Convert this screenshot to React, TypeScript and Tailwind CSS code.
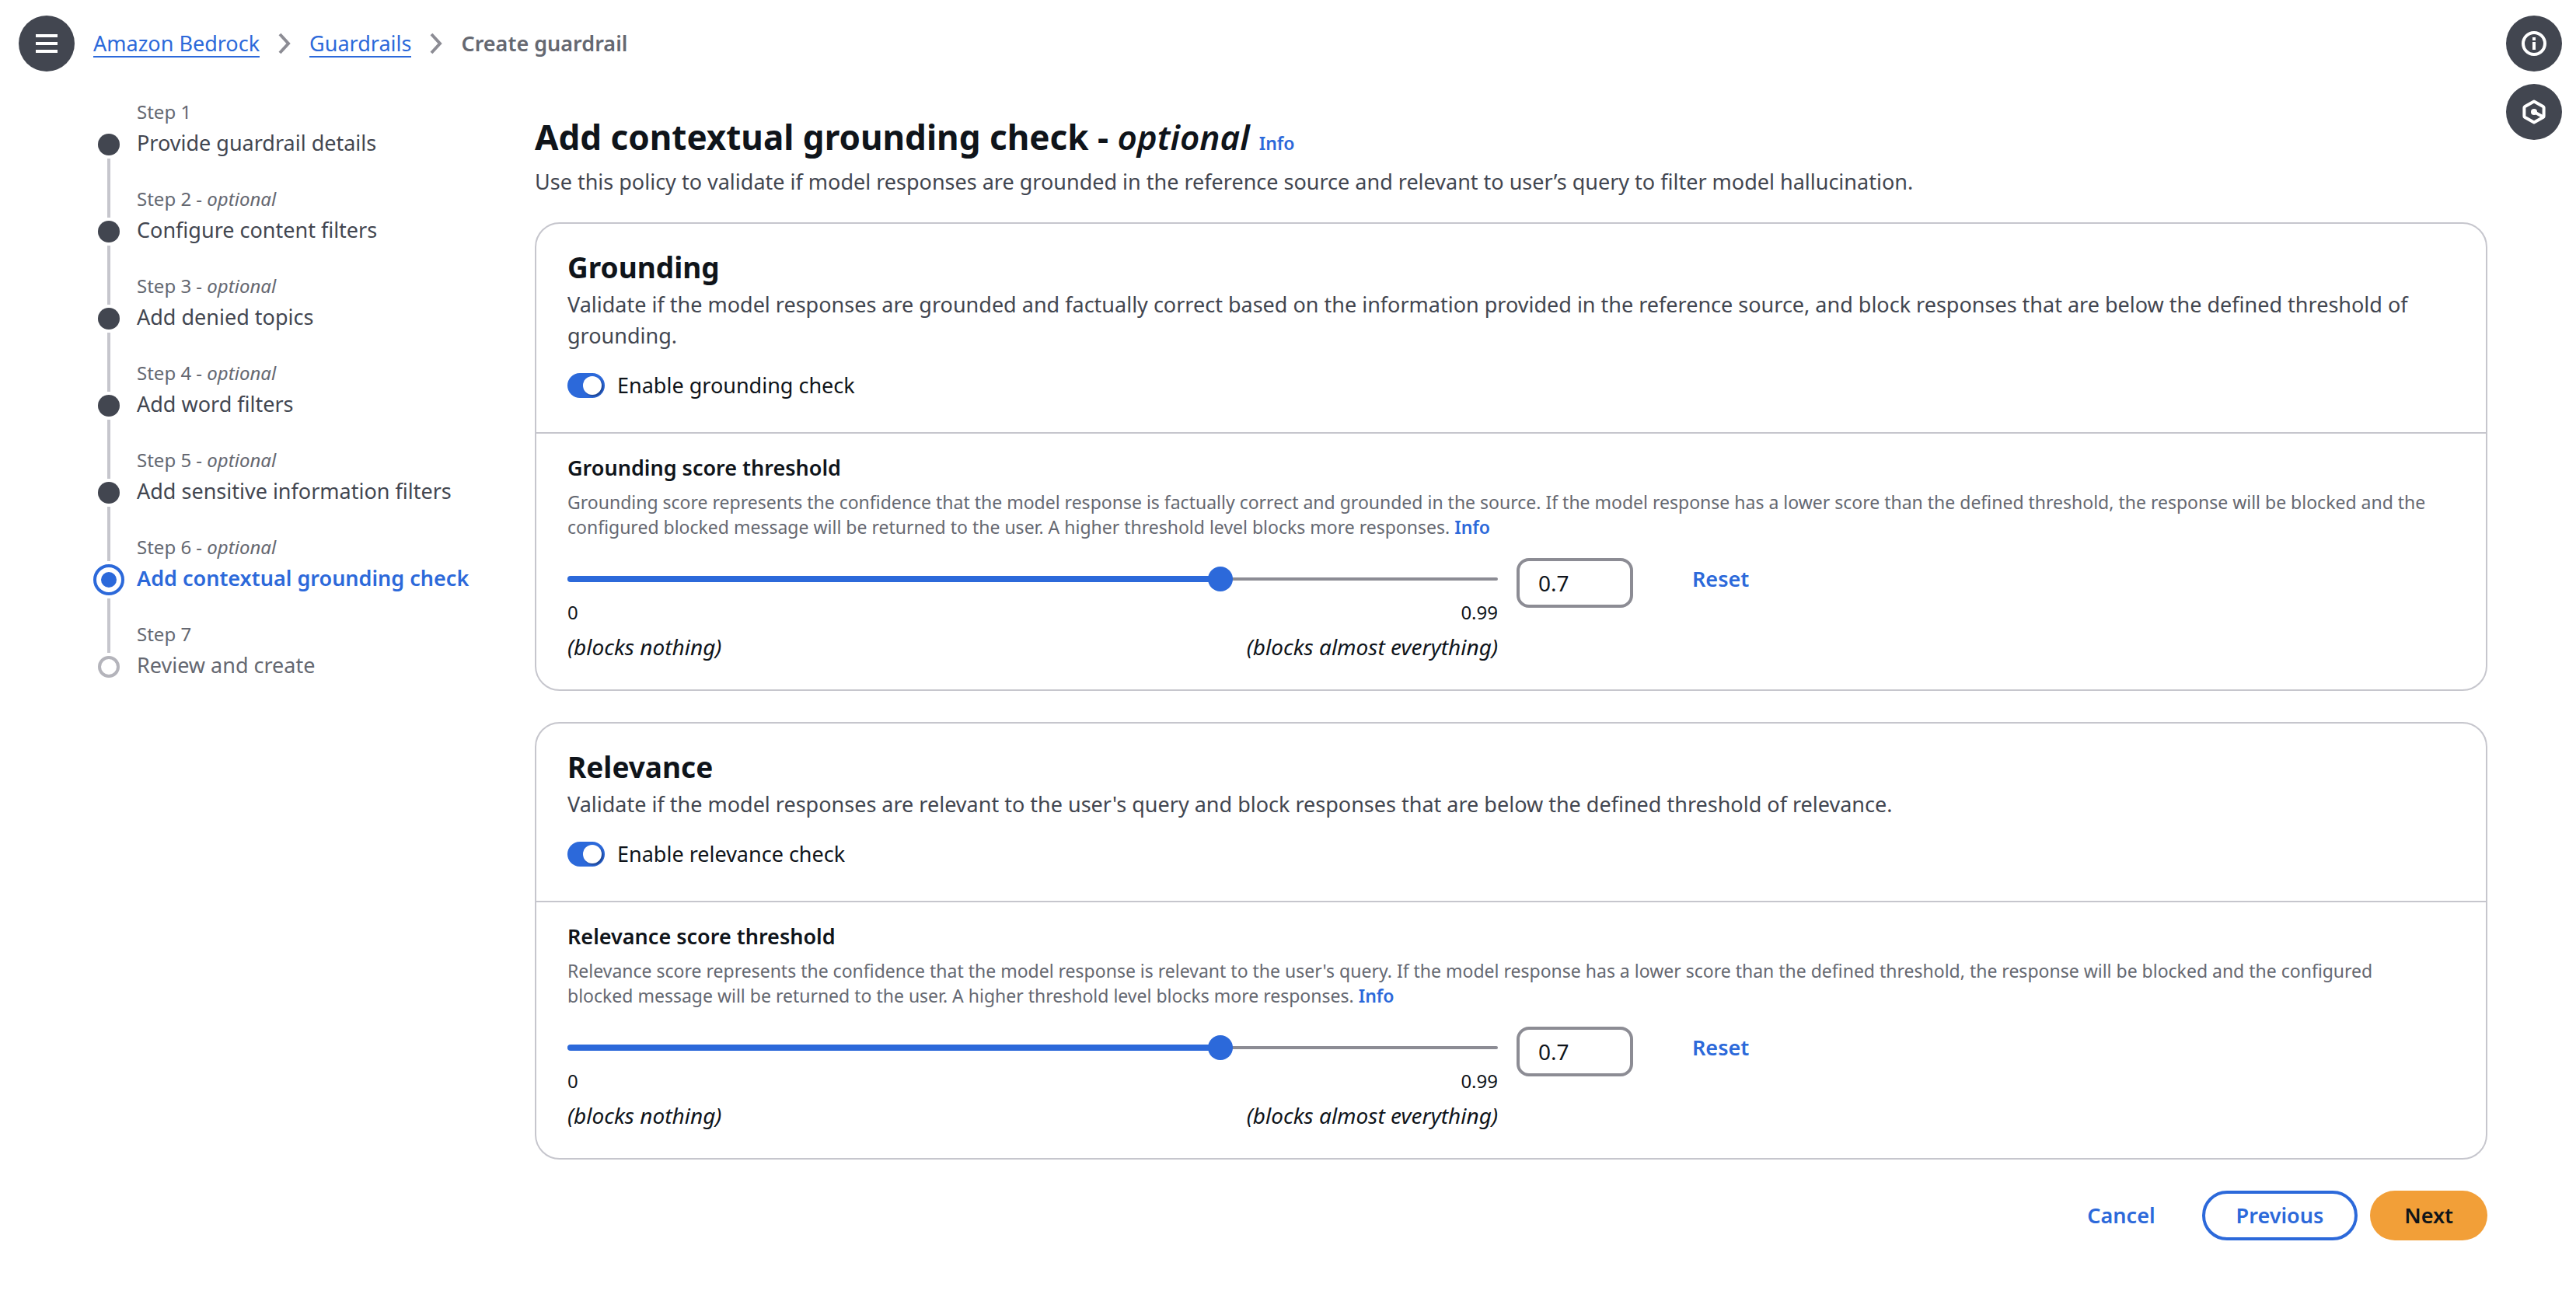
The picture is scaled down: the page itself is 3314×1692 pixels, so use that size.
import { useId, useState } from "react";

type StepState = "done" | "active" | "pending";

const steps: { title: string; optional: boolean; state: StepState }[] = [
  { title: "Provide guardrail details", optional: false, state: "done" },
  { title: "Configure content filters", optional: true, state: "done" },
  { title: "Add denied topics", optional: true, state: "done" },
  { title: "Add word filters", optional: true, state: "done" },
  { title: "Add sensitive information filters", optional: true, state: "done" },
  { title: "Add contextual grounding check", optional: true, state: "active" },
  { title: "Review and create", optional: false, state: "pending" },
];

const titleStyle: Record<StepState, string> = {
  done: "text-[#424650]",
  active: "font-semibold text-[#2c69da]",
  pending: "text-[#656871]",
};

function Chevron() {
  return (
    <svg aria-hidden="true" className="h-8 w-4 shrink-0" viewBox="0 0 16 32" fill="none" stroke="#8c8c94" strokeWidth="4">
      <path d="M2 4 L13 16 L2 28" />
    </svg>
  );
}

function RoundButton({ label, children }: { label: string; children: React.ReactNode }) {
  return (
    <button
      type="button"
      aria-label={label}
      className="flex size-18 shrink-0 items-center justify-center rounded-full bg-[#424650] text-white"
    >
      <svg aria-hidden="true" className="size-8" viewBox="0 0 32 32" fill="none" stroke="currentColor" strokeWidth="4">
        {children}
      </svg>
    </button>
  );
}

function StepMarker({ state }: { state: StepState }) {
  if (state === "active") {
    return (
      <span className="my-1 flex size-10 items-center justify-center rounded-full border-4 border-[#2c69da]">
        <span className="size-5 rounded-full bg-[#2c69da]" />
      </span>
    );
  }
  if (state === "pending") {
    return <span className="my-1 size-7 rounded-full border-4 border-[#b4b4bb]" />;
  }
  return <span className="my-1 size-7 rounded-full bg-[#424650]" />;
}

function StepList() {
  return (
    <nav aria-label="Steps" className="w-[568px] shrink-0 pt-9">
      <ol>
        {steps.map((step, i) => (
          <li key={step.title} aria-current={step.state === "active" ? "step" : undefined} className="flex gap-4">
            <div className="flex w-10 flex-col items-center">
              <span
                className={`w-1 ${step.state === "active" ? "h-[34px]" : "h-10"} ${i === 0 ? "" : "bg-[#c6c6cd]"}`}
              />
              <StepMarker state={step.state} />
              {i < steps.length - 1 && <span className="w-1 flex-1 bg-[#c6c6cd]" />}
            </div>
            <div className="pb-9">
              <div className="text-2xl leading-8 text-[#656871]">
                Step {i + 1}
                {step.optional && (
                  <>
                    {" - "}
                    <i>optional</i>
                  </>
                )}
              </div>
              <div className={`mt-1 leading-10 ${titleStyle[step.state]}`}>{step.title}</div>
            </div>
          </li>
        ))}
      </ol>
    </nav>
  );
}

function InfoLink() {
  return (
    <a href="#info" className="text-[23px] font-semibold text-[#2c69da]">
      Info
    </a>
  );
}

const MAX = 0.99;
const DEFAULT = 0.7;

function ThresholdCard({
  title,
  description,
  toggleLabel,
  scoreLabel,
  hint,
}: {
  title: string;
  description: string;
  toggleLabel: string;
  scoreLabel: string;
  hint: string;
}) {
  const id = useId();
  const [enabled, setEnabled] = useState(true);
  const [value, setValue] = useState(DEFAULT);
  const ratio = value / MAX;

  return (
    <section className="rounded-[32px] border-2 border-[#c6c6cd]">
      <div className="border-b-2 border-[#c6c6cd] px-10 pt-8 pb-10">
        <h2 className="text-[37px] leading-12 font-bold">{title}</h2>
        <p className="mt-1 leading-10 text-[#424650]">{description}</p>
        <div className="mt-6 flex h-10 items-center gap-4">
          <input
            id={`${id}-toggle`}
            type="checkbox"
            role="switch"
            checked={enabled}
            onChange={(e) => setEnabled(e.target.checked)}
            className="flex h-8 w-12 appearance-none items-center rounded-full bg-[#8c8c94] px-1 before:size-6 before:rounded-full before:bg-white before:shadow-[2px_2px_2px_rgba(0,7,22,0.35)] checked:justify-end checked:bg-[#2c69da]"
          />
          <label htmlFor={`${id}-toggle`} className="leading-10">
            {toggleLabel}
          </label>
        </div>
      </div>
      <div className="px-10 pt-6 pb-[35px]">
        <label htmlFor={`${id}-value`} className="block leading-10 font-semibold">
          {scoreLabel}
        </label>
        <p className="mt-2 pr-7 text-[23px] leading-8 text-[#656871]">
          {hint} <InfoLink />
        </p>
        <div className="mt-6 flex items-start">
          <div className="w-[calc(50%-17px)]">
            <div className="relative flex h-[54px] items-center">
              <div className="h-1 w-full rounded-sm bg-[#8c8c94]" />
              <div
                className="absolute left-0 h-2 rounded-sm bg-[#2c69da]"
                style={{ width: `calc(${ratio} * (100% - 32px) + 16px)` }}
              />
              <input
                type="range"
                aria-label={scoreLabel}
                min={0}
                max={MAX}
                step={0.01}
                value={value}
                onChange={(e) => setValue(Number(e.target.value))}
                className="absolute inset-x-0 h-8 w-full appearance-none bg-transparent [&::-webkit-slider-thumb]:size-8 [&::-webkit-slider-thumb]:appearance-none [&::-webkit-slider-thumb]:rounded-full [&::-webkit-slider-thumb]:bg-[#2c69da]"
              />
            </div>
            <div className="flex justify-between text-2xl leading-8">
              <span>0</span>
              <span>0.99</span>
            </div>
            <div className="mt-2 flex justify-between text-[28px] leading-10 italic">
              <span>(blocks nothing)</span>
              <span>(blocks almost everything)</span>
            </div>
          </div>
          <input
            id={`${id}-value`}
            type="text"
            inputMode="decimal"
            value={String(value)}
            onChange={(e) => setValue(Math.min(MAX, Math.max(0, Number(e.target.value) || 0)))}
            className="ml-6 h-16 w-[150px] rounded-2xl border-4 border-[#8c8c94] px-6 text-[28px]"
          />
          <button
            type="button"
            onClick={() => setValue(DEFAULT)}
            className="ml-8 h-[54px] px-11 font-semibold text-[#2c69da]"
          >
            Reset
          </button>
        </div>
      </div>
    </section>
  );
}

export default function App() {
  return (
    <div className="flex min-h-screen bg-white font-['Noto_Sans',sans-serif] text-[27px] text-[#0f141a]">
      <div className="min-w-0 flex-1">
        <header className="flex items-center gap-6 pt-5 pl-6">
          <RoundButton label="Open navigation">
            <path d="M2 6 H30 M2 16 H30 M2 26 H30" />
          </RoundButton>
          <nav aria-label="Breadcrumbs">
            <ol className="flex items-center gap-6 leading-8">
              <li>
                <a href="#bedrock" className="block border-b-2 border-[#2c69da] pt-0.5 text-[#2c69da]">
                  Amazon Bedrock
                </a>
              </li>
              <li className="flex items-center gap-6">
                <Chevron />
                <a href="#guardrails" className="block border-b-2 border-[#2c69da] pt-0.5 text-[#2c69da]">
                  Guardrails
                </a>
              </li>
              <li className="flex items-center gap-6 font-semibold text-[#656871]">
                <Chevron />
                <span aria-current="page">Create guardrail</span>
              </li>
            </ol>
          </nav>
        </header>
        <div className="flex pl-[120px]">
          <StepList />
          <main className="min-w-0 flex-1 pt-14 pb-24">
            <div className="flex items-baseline gap-3">
              <h1 className="text-[44px] leading-14 font-bold">
                Add contextual grounding check - <i className="font-semibold">optional</i>
              </h1>
              <InfoLink />
            </div>
            <p className="mt-2.5 leading-10 text-[#424650]">
              Use this policy to validate if model responses are grounded in the reference source and relevant to user’s
              query to filter model hallucination.
            </p>
            <div className="mt-8 flex flex-col gap-10">
              <ThresholdCard
                title="Grounding"
                description="Validate if the model responses are grounded and factually correct based on the information provided in the reference source, and block responses that are below the defined threshold of grounding."
                toggleLabel="Enable grounding check"
                scoreLabel="Grounding score threshold"
                hint="Grounding score represents the confidence that the model response is factually correct and grounded in the source. If the model response has a lower score than the defined threshold, the response will be blocked and the configured blocked message will be returned to the user. A higher threshold level blocks more responses."
              />
              <ThresholdCard
                title="Relevance"
                description="Validate if the model responses are relevant to the user's query and block responses that are below the defined threshold of relevance."
                toggleLabel="Enable relevance check"
                scoreLabel="Relevance score threshold"
                hint="Relevance score represents the confidence that the model response is relevant to the user's query. If the model response has a lower score than the defined threshold, the response will be blocked and the configured blocked message will be returned to the user. A higher threshold level blocks more responses."
              />
            </div>
            <div className="mt-10 flex justify-end gap-4 font-semibold">
              <button type="button" className="h-16 px-11 text-[#2c69da]">
                Cancel
              </button>
              <button type="button" className="h-16 rounded-full border-4 border-[#2c69da] px-10 text-[#2c69da]">
                Previous
              </button>
              <button type="button" className="h-16 rounded-full bg-[#f29f38] px-11">
                Next
              </button>
            </div>
          </main>
        </div>
      </div>
      <aside aria-label="Help tools" className="flex w-[114px] shrink-0 flex-col gap-4 pt-5 pl-6">
        <RoundButton label="Open help panel">
          <circle cx="16" cy="16" r="14" />
          <path d="M16 8 V12 M16 14 V24" />
        </RoundButton>
        <RoundButton label="Open Amazon Q">
          <path
            d="M16 2.4 L27.6 9 Q28.6 9.6 28.6 10.6 V21.4 Q28.6 22.4 27.6 23 L16 29.6 L4.4 23 Q3.4 22.4 3.4 21.4 V10.6 Q3.4 9.6 4.4 9 Z"
            strokeLinejoin="round"
          />
          <circle cx="16" cy="16" r="4" fill="currentColor" stroke="none" />
          <path d="M16 16 L27 22" />
        </RoundButton>
      </aside>
    </div>
  );
}
